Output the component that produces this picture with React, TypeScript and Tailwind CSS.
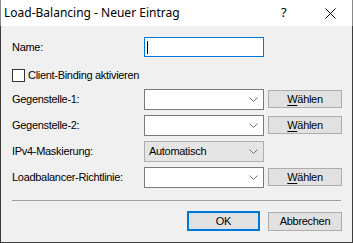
import React from "react";

const Chevron = () => (
  <svg width="9" height="5" viewBox="0 0 9 5" className="block">
    <path d="M0.5 0.5 L4.5 4.5 L8.5 0.5" fill="none" stroke="#707070" strokeWidth="1" />
  </svg>
);

const Combo = () => (
  <div className="w-[120px] h-[21px] bg-white border border-[#7a7a7a] flex items-center justify-end pr-[5px]">
    <Chevron />
  </div>
);

const Waehlen = () => (
  <div className="ml-[4px] mt-[1px] w-[74px] h-[18px] bg-[#e1e1e1] border border-[#adadad] flex items-center justify-center text-black">
    <span><span className="underline underline-offset-[2px]">W</span>ählen</span>
  </div>
);

export default function App() {
  return (
    <div
      className="w-[353px] h-[243px] flex flex-col bg-[#f0f0f0] text-[11px] text-black tracking-[-0.3px]"
      style={{ fontFamily: '"Liberation Sans", Arial, sans-serif' }}
    >
      <div className="h-[26px] bg-white border-x border-[#8a8a8a] flex items-center relative tracking-normal">
        <span className="ml-[3px] text-[12px] text-black" style={{ fontFamily: '"Noto Sans", "Segoe UI", sans-serif' }}>
          Load-Balancing - Neuer Eintrag
        </span>
        <span className="absolute left-[280px] top-[4px] text-[13px] leading-[16px]" style={{ fontFamily: '"Noto Sans", sans-serif' }}>?</span>
        <svg className="absolute left-[324px] top-[8px]" width="11" height="11" viewBox="0 0 11 11">
          <path d="M0.5 0.5 L10.5 10.5 M10.5 0.5 L0.5 10.5" stroke="#000" strokeWidth="1" />
        </svg>
      </div>
      <div className="flex-1 border-x border-b border-[#3c3c3c] pl-[11px] flex flex-col">
        <div className="mt-[11px] h-[20px] flex items-center">
          <span className="w-[132px]">Name:</span>
          <div className="w-[120px] h-[20px] bg-white border border-[#0078d7] flex items-center pl-[2px]">
            <div className="w-[1px] h-[13px] bg-black" />
          </div>
        </div>
        <div className="mt-[12px] h-[13px] flex items-center">
          <div className="w-[13px] h-[13px] bg-white border border-[#333]" />
          <span className="ml-[3px]">Client-Binding aktivieren</span>
        </div>
        <div className="mt-[7px] h-[21px] flex items-start">
          <span className="w-[132px] leading-[21px]">Gegenstelle-1:</span>
          <Combo />
          <Waehlen />
        </div>
        <div className="mt-[5px] h-[21px] flex items-start">
          <span className="w-[132px] leading-[21px]">Gegenstelle-2:</span>
          <Combo />
          <Waehlen />
        </div>
        <div className="mt-[5px] h-[21px] flex items-start">
          <span className="w-[132px] leading-[21px]">IPv4-Maskierung:</span>
          <div className="w-[120px] h-[21px] bg-[#e5e5e5] border border-[#adadad] flex items-center justify-between pl-[4px] pr-[5px]">
            <span>Automatisch</span>
            <Chevron />
          </div>
        </div>
        <div className="mt-[5px] h-[21px] flex items-start">
          <span className="w-[132px] leading-[21px]">Loadbalancer-Richtlinie:</span>
          <Combo />
          <Waehlen />
        </div>
        <div className="mt-[12px] h-[1px] w-[329px] bg-[#a0a0a0]" />
        <div className="mt-[10px] flex items-start justify-end pr-[10px]">
          <div className="w-[73px] h-[20px] bg-[#e1e1e1] border-2 border-[#0078d7] flex items-center justify-center">OK</div>
          <div className="ml-[8px] mt-[1px] w-[74px] h-[19px] bg-[#e1e1e1] border border-[#adadad] flex items-center justify-center">Abbrechen</div>
        </div>
      </div>
    </div>
  );
}
